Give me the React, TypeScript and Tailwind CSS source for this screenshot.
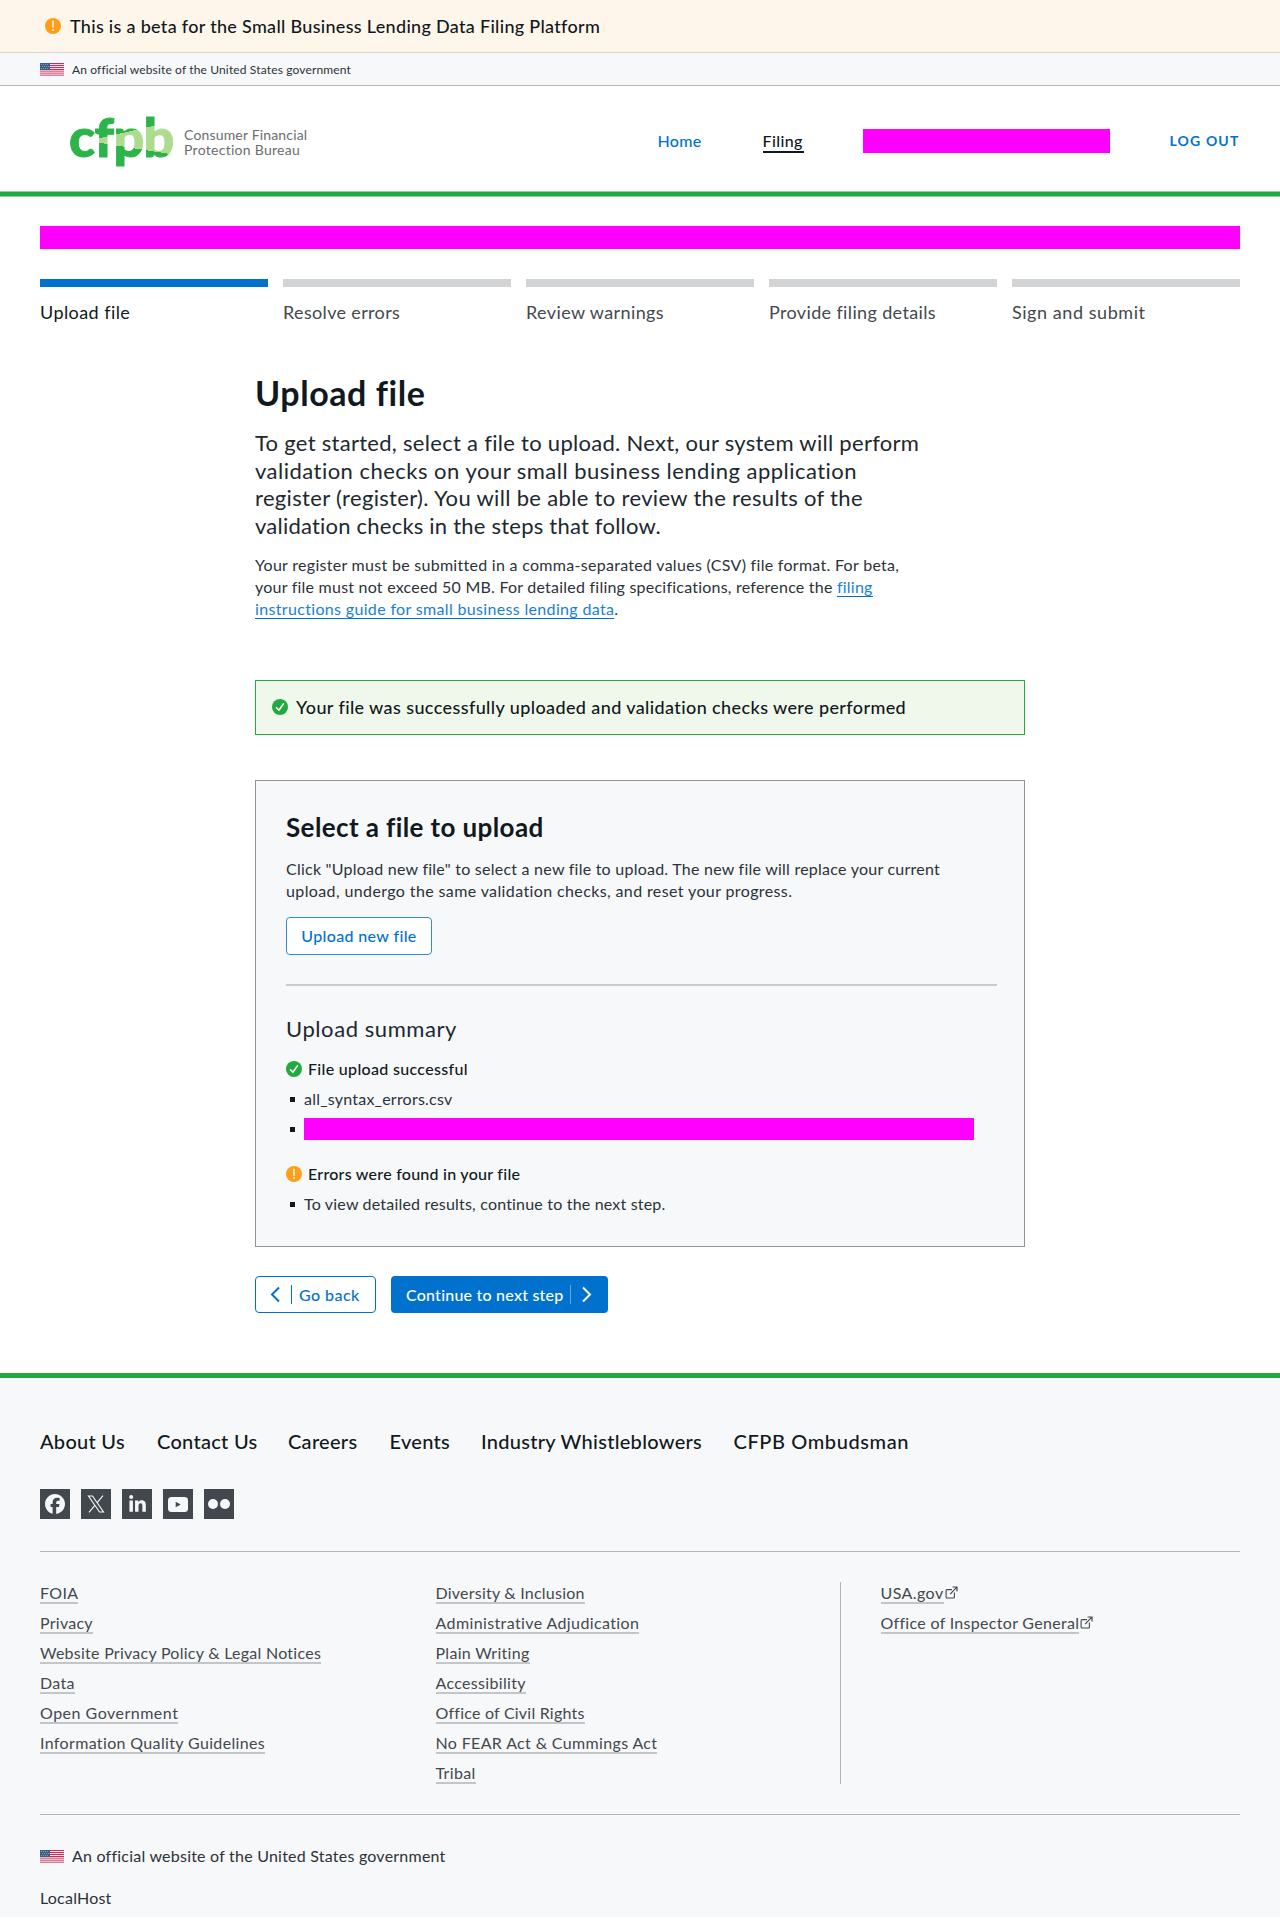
import { FaFacebook, FaLinkedinIn } from "react-icons/fa6";

function Flag() {
  return (
    <svg width="24" height="13" viewBox="0 0 24 13" shapeRendering="crispEdges" className="shrink-0">
      <rect width="24" height="13" fill="#f6dfe6" />
      {[0, 2, 4, 6].map((y) => (
        <rect key={y} y={y} width="24" height="1" fill="#c5305a" />
      ))}
      <rect y="7" width="24" height="6" fill="#e9b3c1" />
      {[8, 10, 12].map((y) => (
        <rect key={y} y={y} width="24" height="1" fill="#dc849c" />
      ))}
      <rect width="10" height="7" fill="#3f5f86" />
      {[1, 3, 5].map((y) =>
        [1, 3, 5, 7].map((x) => (
          <rect key={`${x}-${y}`} x={x + (y === 3 ? 1 : 0)} y={y} width="1" height="1" fill="#8299b4" />
        )),
      )}
    </svg>
  );
}

function Warning() {
  return (
    <svg width="16" height="16" viewBox="0 0 16 16" className="shrink-0">
      <circle cx="8" cy="8" r="8" fill="#ff9e1b" />
      <path d="M8 3.2v6" stroke="#fff" strokeWidth="1.4" strokeLinecap="round" />
      <circle cx="8" cy="12" r="0.95" fill="#fff" />
    </svg>
  );
}

function Check() {
  return (
    <svg width="16" height="16" viewBox="0 0 16 16" className="shrink-0">
      <circle cx="8" cy="8" r="8" fill="#20aa3f" />
      <path
        d="M4.5 8.7l2.4 2.5 4.6-6.4"
        stroke="#fff"
        strokeWidth="1.5"
        fill="none"
        strokeLinecap="round"
        strokeLinejoin="round"
      />
    </svg>
  );
}

function External() {
  return (
    <svg width="13" height="13" viewBox="0 0 13 13" className="mt-1 ml-px shrink-0" fill="none" stroke="#43484e">
      <path d="M7 3.6H2.1a1 1 0 0 0-1 1V11a1 1 0 0 0 1 1H8.400a1 1 0 0 0 1-1V6.500" strokeWidth="1.1" />
      <path d="M5.200 8.200L11.800 1.200M7.500 1h4.500v4.500" strokeWidth="1.2" />
    </svg>
  );
}

const steps = [
  { label: "Upload file", bar: "bg-[#0072ce]", text: "text-[#101820] tracking-[0.024em]" },
  { label: "Resolve errors", bar: "bg-[#d2d3d5]", text: "text-[#43484e] tracking-[0.019em]" },
  { label: "Review warnings", bar: "bg-[#d2d3d5]", text: "text-[#43484e] tracking-[0.022em]" },
  { label: "Provide filing details", bar: "bg-[#d2d3d5]", text: "text-[#43484e] tracking-[0.020em]" },
  { label: "Sign and submit", bar: "bg-[#d2d3d5]", text: "text-[#43484e] tracking-[0.031em]" },
];

const footerNav = [
  { label: "About Us", cls: "w-[117px]" },
  { label: "Contact Us", cls: "w-[131px]" },
  { label: "Careers", cls: "w-[101.500px]" },
  { label: "Events", cls: "w-[91.500px]" },
  { label: "Industry Whistleblowers", cls: "w-[252.500px]" },
  { label: "CFPB Ombudsman", cls: "tracking-[0.030em]" },
];

const col1 = [
  { t: "FOIA", cls: "tracking-[0.020em]" },
  { t: "Privacy", cls: "tracking-[0.016em]" },
  { t: "Website Privacy Policy & Legal Notices", cls: "tracking-[0.016em]" },
  { t: "Data", cls: "tracking-[0.020em]" },
  { t: "Open Government", cls: "tracking-[0.031em]" },
  { t: "Information Quality Guidelines", cls: "tracking-[0.022em]" },
];
const col2 = [
  { t: "Diversity & Inclusion", cls: "tracking-[0.014em]" },
  { t: "Administrative Adjudication", cls: "tracking-[0.024em]" },
  { t: "Plain Writing", cls: "tracking-[0.018em]" },
  { t: "Accessibility", cls: "tracking-[0.020em]" },
  { t: "Office of Civil Rights", cls: "tracking-[0.014em]" },
  { t: "No FEAR Act & Cummings Act", cls: "tracking-[0.022em]" },
  { t: "Tribal", cls: "tracking-[0.022em]" },
];
const col3 = [
  { t: "USA.gov", cls: "tracking-[0.026em]" },
  { t: "Office of Inspector General", cls: "tracking-[0.019em]" },
];

function Links({ items, external }: { items: { t: string; cls: string }[]; external?: boolean }) {
  return (
    <ul className="flex flex-col gap-2 text-base leading-[22px] text-[#43484e]">
      {items.map(({ t, cls }) => (
        <li key={t} className="flex h-[22px]">
          <a className={`h-[22px] border-b-2 border-[#c4c5c7] whitespace-nowrap ${cls}`}>{t}</a>
          {external && <External />}
        </li>
      ))}
    </ul>
  );
}

function Social({ children }: { children: React.ReactNode }) {
  return <span className="flex size-[30px] items-center justify-center bg-[#43484e] text-[#f7f8f9]">{children}</span>;
}

export default function App() {
  return (
    <div className="h-[1929px] overflow-hidden bg-white font-['Lato',sans-serif] whitespace-nowrap text-[#101820]">
      <div className="flex h-[53px] items-center border-b border-[#dcd6cf] bg-[#fff6eb] pl-[45px] text-lg font-medium tracking-[0.017em]">
        <Warning />
        <span className="ml-[9px]">This is a beta for the Small Business Lending Data Filing Platform</span>
      </div>
      <div className="flex h-[33px] items-center border-b border-[#b4b5b6] bg-[#f7f8fa] pl-10 text-xs tracking-[0.012em] text-[#2b3239]">
        <Flag />
        <span className="mt-0.5 ml-2">An official website of the United States government</span>
      </div>

      <header className="flex h-[105px] justify-between pr-10 pl-[69px]">
        <div className="flex">
          <div className="mt-[17px] h-[68px] w-[115px] bg-[conic-gradient(from_0deg_at_19px_38px,#2cb34a_77deg,#addc91_77deg_99deg,#2cb34a_99deg)] bg-clip-text text-[54px] leading-[68px] font-black tracking-[-0.012em] text-transparent [-webkit-text-stroke:1px_transparent]">
            cfpb
          </div>
          <div className="mt-[42px] text-sm leading-[14.5px] tracking-[0.012em] text-[#6b6d70]">
            <div>Consumer Financial</div>
            <div className="tracking-[0.020em]">Protection Bureau</div>
          </div>
        </div>
        <nav className="flex pt-11 text-base leading-[22px] font-medium">
          <a className="w-[105px] tracking-[0.018em] text-[#0072ce]">Home</a>
          <a className="h-[23px] w-[41px] border-b-2 border-[#101820] tracking-[0.025em]">Filing</a>
          <span className="-mt-px ml-[59px] h-6 w-[247px] bg-[#ff00ff]" />
          <a className="ml-[60px] w-[70.500px] text-sm leading-[22px] font-bold tracking-[1.15px] text-[#0072ce]">LOG OUT</a>
        </nav>
      </header>
      <div className="h-[6px] border-y border-[#90d59f] bg-[#20aa3f]" />

      <main className="px-10 pt-[29px]">
        <div className="h-[23px] bg-[#ff00ff]" />
        <div className="mt-[30px] grid grid-cols-5 gap-[15px]">
          {steps.map((s) => (
            <div key={s.label}>
              <div className={`h-2 ${s.bar}`} />
              <div className={`mt-[13px] text-lg leading-6 ${s.text}`}>{s.label}</div>
            </div>
          ))}
        </div>

        <div className="mx-auto mt-12 w-[770px]">
          <h1 className="text-[34px] leading-[42px] font-bold tracking-[0.017em]">Upload file</h1>
          <p className="mt-[15px] text-[22px] leading-[27.500px] text-[#20282f]">
            <span className="block tracking-[0.013em]">
              To get started, select a file to upload. Next, our system will perform
            </span>
            <span className="block tracking-[0.022em]">validation checks on your small business lending application</span>
            <span className="block tracking-[0.015em]">
              register (register). You will be able to review the results of the
            </span>
            <span className="block tracking-[0.010em]">validation checks in the steps that follow.</span>
          </p>
          <p className="mt-[14.500px] text-base leading-[22px] text-[#2b3239]">
            <span className="block tracking-[0.018em]">
              Your register must be submitted in a comma-separated values (CSV) file format. For beta,
            </span>
            <span className="block tracking-[0.014em]">
              your file must not exceed 50 MB. For detailed filing specifications, reference the{" "}
              <a className="border-b border-[#0072ce] text-[#1a80d3]">filing</a>
            </span>
            <span className="block">
              <a className="border-b border-[#0072ce] tracking-[0.021em] text-[#1a80d3]">
                instructions guide for small business lending data
              </a>
              .
            </span>
          </p>

          <div className="mt-[60.500px] flex h-[55px] items-center border border-[#20aa3f] bg-[#f0f8eb] pb-px pl-4 text-lg font-medium tracking-[0.022em]">
            <Check />
            <span className="ml-2">Your file was successfully uploaded and validation checks were performed</span>
          </div>

          <section className="mt-[45px] h-[467px] border border-[#919395] bg-[#f7f8fa] pt-[30px] pl-[30px]">
            <h2 className="text-[26px] leading-8 font-bold tracking-[0.015em]">Select a file to upload</h2>
            <p className="mt-[15px] text-base leading-[22px] text-[#2b3239]">
              <span className="block tracking-[0.015em]">
                Click "Upload new file" to select a new file to upload. The new file will replace your current
              </span>
              <span className="block tracking-[0.024em]">
                upload, undergo the same validation checks, and reset your progress.
              </span>
            </p>
            <button className="mt-[15px] flex h-[38px] w-[146px] items-center justify-center rounded-[4px] border border-[#2e8bd7] bg-white text-base font-medium tracking-[0.022em] text-[#0072ce]">
              Upload new file
            </button>
            <div className="mt-[29px] h-0.5 w-[711px] bg-[#c9cacc]" />
            <h3 className="mt-7 text-[22px] leading-[29px] tracking-[0.026em] text-[#20282f]">Upload summary</h3>
            <div className="mt-[15px] flex h-[22px] items-center gap-[6px] text-base leading-[22px] font-medium tracking-[0.020em]">
              <Check />
              File upload successful
            </div>
            <div className="mt-2 flex h-[22px] items-center pl-1 text-base leading-[22px] tracking-[0.014em] text-[#2b3239]">
              <span className="mr-[9px] size-[5px] bg-[#101820]" />
              all_syntax_errors.csv
            </div>
            <div className="mt-2 flex h-[22px] items-center pl-1">
              <span className="mr-[9px] size-[5px] bg-[#101820]" />
              <span className="h-[22px] w-[670px] bg-[#ff00ff]" />
            </div>
            <div className="mt-[23px] flex h-[22px] items-center gap-[6px] text-base leading-[22px] font-medium tracking-[0.016em]">
              <Warning />
              Errors were found in your file
            </div>
            <div className="mt-2 flex h-[22px] items-center pl-1 text-base leading-[22px] tracking-[0.012em] text-[#2b3239]">
              <span className="mr-[9px] size-[5px] bg-[#101820]" />
              To view detailed results, continue to the next step.
            </div>
          </section>

          <div className="mt-[29px] flex gap-[15px] text-base font-medium">
            <button className="flex h-[37px] w-[121px] items-center rounded-[4px] border border-[#0072ce] pl-[14px] text-[#0072ce]">
              <svg width="11" height="17" viewBox="0 0 11 17" fill="none" stroke="currentColor" strokeWidth="2">
                <path d="M9 1.500L2 8.500l7 7" />
              </svg>
              <span className="mr-[7px] ml-[10px] h-[19px] w-px bg-[#0072ce]" />
              <span className="tracking-[0.028em]">Go back</span>
            </button>
            <button className="flex h-[37px] w-[217px] items-center rounded-[4px] bg-[#0072ce] pl-[15px] text-white">
              <span className="w-[164px] text-left tracking-[0.014em]">Continue to next step</span>
              <span className="mr-[10px] h-[19px] w-px bg-[#5fa8e2]" />
              <svg width="11" height="17" viewBox="0 0 11 17" fill="none" stroke="currentColor" strokeWidth="2">
                <path d="M2 1.500l7 7-7 7" />
              </svg>
            </button>
          </div>
        </div>
      </main>

      <footer className="mt-[60px] h-[544px] border-t-[5px] border-[#20aa3f] bg-[#f7f8fa] px-10 pt-[51px]">
        <nav className="flex text-xl leading-6 font-medium tracking-[0.014em]">
          {footerNav.map((n) => (
            <a key={n.label} className={n.cls}>
              {n.label}
            </a>
          ))}
        </nav>
        <div className="mt-9 flex gap-[11px]">
          <Social>
            <FaFacebook size={20} />
          </Social>
          <Social>
            <svg width="18" height="18" viewBox="0 0 18 18" fill="none" stroke="currentColor" strokeWidth="1.1">
              <path d="M1.500 1h4l11 16h-4zM16 .7L10 7.800M8 10.200L2 17.300" />
            </svg>
          </Social>
          <Social>
            <FaLinkedinIn size={19} />
          </Social>
          <Social>
            <svg width="20" height="15" viewBox="0 0 20 15">
              <rect width="20" height="15" rx="3.500" fill="currentColor" />
              <path d="M7.700 4.700v5.600l5-2.800z" fill="#43484e" />
            </svg>
          </Social>
          <Social>
            <svg width="24" height="12" viewBox="0 0 24 12" fill="currentColor">
              <circle cx="6" cy="6" r="5" />
              <circle cx="18" cy="6" r="5" />
            </svg>
          </Social>
        </div>
        <div className="mt-8 border-t border-[#b4b5b6] pt-[30px]">
          <div className="flex h-[202px]">
            <div className="w-[395.500px]">
              <Links items={col1} />
            </div>
            <div className="w-[404px]">
              <Links items={col2} />
            </div>
            <div className="border-l border-[#b4b5b6] pl-10">
              <Links items={col3} external />
            </div>
          </div>
        </div>
        <div className="mt-[30px] border-t border-[#b4b5b6] pt-[30px] text-base leading-[22px] text-[#2b3239]">
          <div className="flex items-center gap-2 tracking-[0.014em]">
            <Flag />
            An official website of the United States government
          </div>
          <div className="mt-5 tracking-[0.013em]">LocalHost</div>
        </div>
      </footer>
    </div>
  );
}
